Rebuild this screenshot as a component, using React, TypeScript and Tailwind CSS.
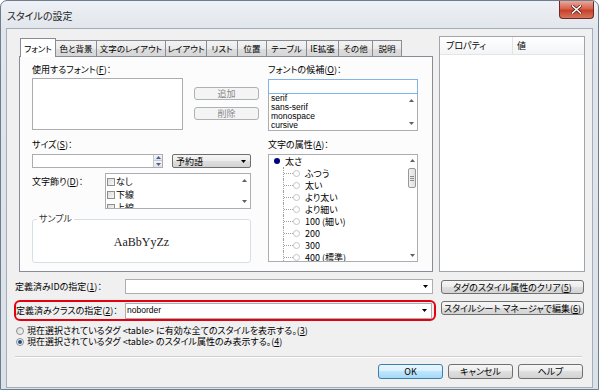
import React from 'react';

const JP = "[font-family:'Noto_Sans_CJK_JP',sans-serif] [font-feature-settings:'palt']";

function Tri({ up = false, color = '#000' }: { up?: boolean; color?: string }) {
  return (
    <svg width="5" height="3" viewBox="0 0 5 3" className="block">
      <path d={up ? 'M0 3H5L2.5 0Z' : 'M0 0H5L2.5 3Z'} fill={color} />
    </svg>
  );
}

function Btn({ children, className = '', disabled = false, def = false }: { children: React.ReactNode; className?: string; disabled?: boolean; def?: boolean }) {
  const look = disabled
    ? 'border-[#adb2b5] bg-[#f4f4f4] text-[#8a8a8a]'
    : def
    ? 'border-[#3c7fb1] bg-[linear-gradient(#eaf6fd,#d9f0fc_50%,#bee6fd_50%,#a7d9f5)]'
    : 'border-[#707070] bg-[linear-gradient(#f6f6f6,#ececec_50%,#dfdfdf_50%,#d3d3d3)]';
  return (
    <div className={`flex items-center justify-center rounded-[3px] border leading-none shrink-0 ${look} ${className}`}>
      {children}
    </div>
  );
}

function U({ children }: { children: React.ReactNode }) {
  return <span className="underline underline-offset-1">{children}</span>;
}

function Check() {
  return <span className="w-[8px] h-[8px] border border-[#8e8f8f] bg-[linear-gradient(135deg,#dcdcdc,#f8f8f8)] shrink-0" />;
}

function TreeChild({ label }: { label: string }) {
  return (
    <div className="flex items-center h-[12px]">
      <div className="relative w-[10px] h-[12px] ml-[9px] border-l border-dotted border-[#a0a0a0]">
        <div className="mt-[6px] w-[9px] border-t border-dotted border-[#a0a0a0]" />
      </div>
      <span className="w-[7px] h-[7px] rounded-full border border-[#c4c4c4] bg-white shrink-0" />
      <span className="ml-[5px] leading-none">{label}</span>
    </div>
  );
}

const tabs: [string, number][] = [
  ['フォント', 36],
  ['色と背景', 41],
  ['文字のレイアウト', 69],
  ['レイアウト', 41],
  ['リスト', 31],
  ['位置', 29],
  ['テーブル', 40],
  ['IE拡張', 32],
  ['その他', 34],
  ['説明', 29],
];

export default function App() {
  return (
    <div className={`w-[599px] h-[390px] ${JP} text-[9px] text-black bg-white`}>
      <div className="w-[599px] h-[390px] flex flex-col rounded-t-[7px] border border-[#6f7c8c] bg-[linear-gradient(180deg,#eef1f5_0px,#e1e6ec_28px,#dbe1e8_100%)] overflow-hidden">
        {/* title bar */}
        <div className="h-[27px] flex items-start shrink-0">
          <div className="ml-[6px] mt-[9px] text-[10px] leading-[12px] text-[#1e1e1e]">スタイルの設定</div>
          <div className="ml-auto mr-[4px] w-[35px] h-[18px] rounded-b-[4px] border border-t-0 border-[#6b2b24] bg-[linear-gradient(#e9a99b,#d7624e_45%,#c7402a_55%,#d8745c)] flex items-center justify-center">
            <svg width="11" height="9" viewBox="0 0 11 9">
              <path d="M1.5 1L9.5 8M9.5 1L1.5 8" stroke="#5a1a12" strokeWidth="3" strokeLinecap="square" />
              <path d="M1.5 1L9.5 8M9.5 1L1.5 8" stroke="#ffffff" strokeWidth="1.6" strokeLinecap="square" />
            </svg>
          </div>
        </div>

        {/* client */}
        <div className="ml-[5px] w-[587px] h-[360px] border border-[#a3aebb] bg-[#f0f0f0] flex flex-col shrink-0">
          {/* top row */}
          <div className="flex pt-[7px]">
            <div className="ml-[12px] w-[414px] pt-[2px]">
              {/* tab strip */}
              <div className="h-[18px] flex items-end pl-[1px] text-[8.5px]">
                {tabs.map(([t, w], i) =>
                  i === 0 ? (
                    <div key={t} style={{ width: w }} className="h-[19px] -mb-[1px] relative z-10 bg-white border border-b-0 border-[#898c95] flex items-center justify-center leading-none">
                      {t}
                    </div>
                  ) : (
                    <div key={t} style={{ width: w }} className="h-[16px] border-t border-r border-[#898c95] bg-[linear-gradient(#f3f3f3,#ebebeb_50%,#dddddd_50%,#d6d6d6)] flex items-center justify-center leading-none whitespace-nowrap">
                      {t}
                    </div>
                  )
                )}
              </div>
              {/* tab panel */}
              <div className="h-[216px] border border-[#898c95] bg-[#fcfcfc] flex pl-[12px]">
                {/* left column */}
                <div className="w-[227px] flex flex-col">
                  <div className="mt-[7px] h-[12px] leading-[12px]">使用するフォント(<U>F</U>)：</div>
                  <div className="mt-[2px] flex">
                    <div className="w-[151px] h-[52px] border border-[#abadb3] bg-white" />
                    <div className="ml-[11px] w-[65px] pt-[9px] flex flex-col gap-[7px]">
                      <Btn disabled className="h-[13px]">追加</Btn>
                      <Btn disabled className="h-[13px]">削除</Btn>
                    </div>
                  </div>
                  <div className="mt-[9px] h-[12px] leading-[12px]">サイズ(<U>S</U>)：</div>
                  <div className="mt-[3px] flex h-[14px]">
                    <div className="w-[131px] h-[14px] border border-[#abadb3] bg-white flex justify-end">
                      <div className="w-[9px] h-[12px] flex flex-col border-l border-[#c5c9cf]">
                        <div className="h-[6px] bg-[linear-gradient(#f4f6f8,#dfe4ea)] border-b border-[#c5c9cf] flex items-center justify-center"><Tri up color="#4d6185" /></div>
                        <div className="h-[6px] bg-[linear-gradient(#f4f6f8,#dfe4ea)] flex items-center justify-center"><Tri color="#4d6185" /></div>
                      </div>
                    </div>
                    <div className="ml-[9px] w-[79px] h-[14px] rounded-[2px] border border-[#707070] bg-[linear-gradient(#f6f6f6,#ececec_50%,#dfdfdf_50%,#d3d3d3)] flex items-center pl-[3px] pr-[4px]">
                      <span className="leading-none">予約語</span>
                      <span className="ml-auto"><Tri /></span>
                    </div>
                  </div>
                  <div className="mt-[5px] flex">
                    <div className="w-[73px] pt-[3px] leading-[12px]">文字飾り(<U>D</U>)：</div>
                    <div className="w-[146px] h-[36px] border border-[#abadb3] bg-white flex overflow-hidden">
                      <div className="flex-1 pl-[1px] pt-[1px]">
                        {['なし', '下線', '上線'].map((t) => (
                          <div key={t} className="h-[13px] flex items-center gap-[1px]">
                            <Check />
                            <span className="leading-none">{t}</span>
                          </div>
                        ))}
                      </div>
                      <div className="w-[11px] flex flex-col items-center justify-between py-[5px]">
                        <Tri up color="#606060" />
                        <Tri color="#606060" />
                      </div>
                    </div>
                  </div>
                  <fieldset className="mt-[4px] w-[219px] h-[50px] border border-[#d5dfe5] rounded-[3px] bg-white">
                    <legend className="ml-[4px] px-[2px] h-[12px] leading-[12px] text-[#333]">サンプル</legend>
                    <div className="h-[37px] flex items-center justify-center pb-[3px] [font-family:'Liberation_Serif',serif] text-[12px] text-[#222]">AaBbYyZz</div>
                  </fieldset>
                </div>
                {/* right column */}
                <div className="ml-[9px] w-[150px] flex flex-col">
                  <div className="mt-[7px] h-[12px] leading-[12px]">フォントの候補(<U>O</U>)：</div>
                  <div className="mt-[3px] h-[15px] border border-[#7eb4ea] bg-white" />
                  <div className="h-[37px] border border-t-0 border-[#abadb3] bg-white flex [font-family:'Liberation_Sans',sans-serif] text-[8.5px]">
                    <div className="flex-1 pl-[2px]">
                      {['serif', 'sans-serif', 'monospace', 'cursive'].map((t) => (
                        <div key={t} className="h-[9px] leading-[9px]">{t}</div>
                      ))}
                    </div>
                    <div className="w-[11px] flex flex-col items-center justify-between py-[5px]">
                      <Tri up color="#606060" />
                      <Tri color="#606060" />
                    </div>
                  </div>
                  <div className="mt-[8px] h-[12px] leading-[12px]">文字の属性(<U>A</U>)：</div>
                  <div className="mt-[3px] h-[108px] border border-[#abadb3] bg-white flex overflow-hidden">
                    <div className="flex-1 pl-[5px]">
                      <div className="flex items-center h-[12px]">
                        <span className="w-[6px] h-[6px] rounded-full bg-[#000080] shrink-0" />
                        <span className="ml-[5px] leading-none">太さ</span>
                      </div>
                      {['ふつう', '太い', 'より太い', 'より細い', '100 (細い)', '200', '300', '400 (標準)'].map((t) => (
                        <TreeChild key={t} label={t} />
                      ))}
                    </div>
                    <div className="w-[10px] flex flex-col items-center pt-[4px] pb-[4px]">
                      <Tri up color="#606060" />
                      <div className="mt-[6px] w-[8px] h-[20px] rounded-[2px] border border-[#979797] bg-[linear-gradient(90deg,#f2f2f2,#e0e0e0)] flex flex-col items-center justify-center gap-[1px]">
                        <span className="w-[4px] h-px bg-[#8a8a8a]" />
                        <span className="w-[4px] h-px bg-[#8a8a8a]" />
                        <span className="w-[4px] h-px bg-[#8a8a8a]" />
                      </div>
                      <div className="mt-auto"><Tri color="#606060" /></div>
                    </div>
                  </div>
                </div>
              </div>
            </div>
            {/* property panel */}
            <div className="ml-[6px] w-[146px] h-[236px] border border-[#a0a4ab] bg-white flex flex-col">
              <div className="h-[18px] flex bg-[linear-gradient(#ffffff,#f3f4f6)] border-b border-[#e5e5e5]">
                <div className="w-[73px] border-r border-[#e3e3e3] pl-[6px] flex items-center leading-none">プロパティ</div>
                <div className="pl-[4px] flex items-center leading-none">値</div>
              </div>
            </div>
          </div>

          {/* ID row */}
          <div className="mt-[7px] flex">
            <div className="w-[118px] pl-[8px] flex items-center leading-none">定義済みIDの指定(<U>1</U>)：</div>
            <div className="w-[308px] h-[15px] border border-[#abadb3] bg-white flex items-center justify-end pr-[4px]"><Tri /></div>
            <Btn className="ml-[8px] mt-[1px] w-[143px] h-[14px]">タグのスタイル属性のクリア(<U>5</U>)</Btn>
          </div>

          {/* class row */}
          <div className="mt-[6px] flex">
            <div className="ml-[7px] w-[422px] h-[21px] border-2 border-[#e4000d] rounded-[6px] flex items-center">
              <div className="w-[109px] leading-none">定義済みクラスの指定(<U>2</U>)：</div>
              <div className="w-[307px] h-[16px] border border-[#abadb3] bg-white flex items-center pl-[1px] pr-[4px]">
                <span className="[font-family:'Liberation_Sans',sans-serif] text-[8.5px] leading-none">noborder</span>
                <span className="ml-auto"><Tri /></span>
              </div>
            </div>
            <Btn className="ml-[5px] mt-[1px] w-[143px] h-[14px]">スタイルシート マネージャで編集(<U>6</U>)</Btn>
          </div>

          {/* radios */}
          <div className="mt-[4px] h-[11px] pl-[9px] flex items-center">
            <span className="w-[8px] h-[8px] rounded-full border border-[#8f8f8f] bg-[linear-gradient(135deg,#d8d8d8,#f8f8f8)] shrink-0" />
            <span className="ml-[3px] leading-none">現在選択されているタグ &lt;table&gt; に有効な全てのスタイルを表示する。(<U>3</U>)</span>
          </div>
          <div className="h-[11px] pl-[9px] flex items-center">
            <span className="w-[8px] h-[8px] rounded-full border border-[#8f8f8f] bg-[#eef2f6] flex items-center justify-center shrink-0">
              <span className="w-[4px] h-[4px] rounded-full bg-[#1d4f8c]" />
            </span>
            <span className="ml-[3px] leading-none">現在選択されているタグ &lt;table&gt; のスタイル属性のみ表示する。(<U>4</U>)</span>
          </div>

          {/* separator */}
          <div className="mt-[9px] ml-[8px] w-[567px] h-[2px] border-t border-[#cfcfcf] border-b border-b-white" />

          {/* dialog buttons */}
          <div className="mt-[6px] flex justify-end pr-[9px] gap-[5px]">
            <Btn def className="w-[65px] h-[15px]">OK</Btn>
            <Btn className="w-[65px] h-[15px]">キャンセル</Btn>
            <Btn className="w-[65px] h-[15px]">ヘルプ</Btn>
          </div>
        </div>
      </div>
    </div>
  );
}
